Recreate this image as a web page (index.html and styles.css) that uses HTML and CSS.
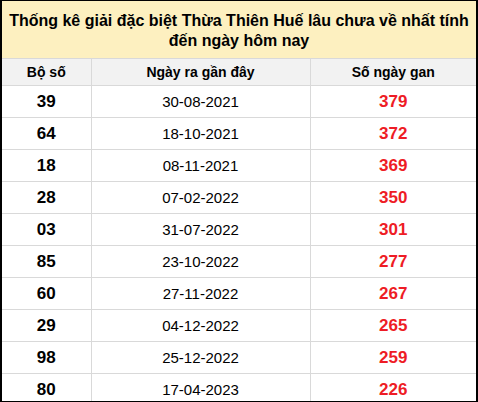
FILE: index.html
```html
<!DOCTYPE html>
<html lang="vi">
<head>
<meta charset="utf-8">
<link rel="stylesheet" href="styles.css">
</head>
<body>
<div class="frame">
  <div class="title">Thống kê giải đặc biệt Thừa Thiên Huế lâu chưa về nhất tính đến ngày hôm nay</div>
  <table class="stats">
    <colgroup><col class="c1"><col class="c2"><col class="c3"></colgroup>
    <thead>
      <tr><th>Bộ số</th><th>Ngày ra gần đây</th><th>Số ngày gan</th></tr>
    </thead>
    <tbody>
      <tr><td class="num">39</td><td class="date">30-08-2021</td><td class="gan">379</td></tr>
      <tr><td class="num">64</td><td class="date">18-10-2021</td><td class="gan">372</td></tr>
      <tr><td class="num">18</td><td class="date">08-11-2021</td><td class="gan">369</td></tr>
      <tr><td class="num">28</td><td class="date">07-02-2022</td><td class="gan">350</td></tr>
      <tr><td class="num">03</td><td class="date">31-07-2022</td><td class="gan">301</td></tr>
      <tr><td class="num">85</td><td class="date">23-10-2022</td><td class="gan">277</td></tr>
      <tr><td class="num">60</td><td class="date">27-11-2022</td><td class="gan">267</td></tr>
      <tr><td class="num">29</td><td class="date">04-12-2022</td><td class="gan">265</td></tr>
      <tr><td class="num">98</td><td class="date">25-12-2022</td><td class="gan">259</td></tr>
      <tr><td class="num">80</td><td class="date">17-04-2023</td><td class="gan">226</td></tr>
    </tbody>
  </table>
</div>
</body>
</html>
```
FILE: styles.css
```css
html, body {
  margin: 0;
  padding: 0;
  background: #ffffff;
}
body {
  font-family: "Liberation Sans", Arial, sans-serif;
  color: #000;
}
.frame {
  width: 478px;
  height: 402px;
  box-sizing: border-box;
  border-style: solid;
  border-color: #000;
  border-width: 1px 2px 1px 2px;
  overflow: hidden;
}
.title {
  background: #fdf0c0;
  height: 57px;
  box-sizing: border-box;
  padding: 10px 2px 0;
  font-size: 16px;
  font-weight: bold;
  line-height: 20px;
  text-align: center;
}
.stats {
  width: 474px;
  border-collapse: collapse;
  table-layout: fixed;
}
.c1 { width: 89px; }
.c2 { width: 219px; }
.c3 { width: 166px; }
.stats th, .stats td {
  border: 1px solid #d9d9d9;
  padding: 0;
  text-align: center;
  vertical-align: middle;
}
.stats tr > :first-child { border-left: none; }
.stats tr > :last-child { border-right: none; }
.stats th {
  background: #f2f2f2;
  height: 26px;
  font-size: 14px;
  font-weight: bold;
}
.stats td {
  height: 31px;
}
.num {
  font-size: 17px;
  font-weight: bold;
}
.date {
  font-size: 15px;
}
.gan {
  font-size: 17px;
  font-weight: bold;
  color: #ee1c25;
}
```
